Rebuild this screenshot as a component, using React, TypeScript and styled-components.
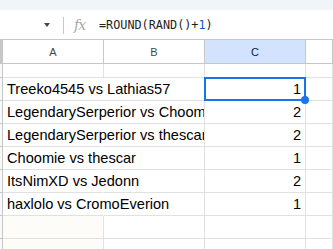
import { Fragment } from "react";
import styled, { createGlobalStyle } from "styled-components";

const GlobalStyle = createGlobalStyle`
  html, body {
    margin: 0;
    padding: 0;
    background: #ffffff;
    overflow: hidden;
  }
  body {
    font-family: "Liberation Sans", Arial, sans-serif;
  }
`;

const matches = [
  { name: "Treeko4545 vs Lathias57", result: 1 },
  { name: "LegendarySerperior vs Choomie", result: 2 },
  { name: "LegendarySerperior vs thescar", result: 2 },
  { name: "Choomie vs thescar", result: 1 },
  { name: "ItsNimXD vs Jedonn", result: 2 },
  { name: "haxlolo vs CromoEverion", result: 1 },
];

const Page = styled.div`
  width: 333px;
  height: 249px;
  overflow: hidden;
  display: flex;
  flex-direction: column;

  & > * {
    flex-shrink: 0;
  }
`;

const ChromeBand = styled.div`
  height: 10px;
  background: #f1f4f9;
`;

const FormulaBar = styled.div`
  height: 29px;
  display: flex;
  align-items: center;
  background: #ffffff;
`;

const NameBox = styled.div`
  width: 63px;
  height: 100%;
  display: flex;
  align-items: center;
  padding-left: 44px;
  box-sizing: border-box;
`;

const Caret = styled.span`
  width: 0;
  height: 0;
  border-left: 3.5px solid transparent;
  border-right: 3.5px solid transparent;
  border-top: 4px solid #444746;
  margin-top: 1px;
`;

const Divider = styled.span`
  width: 1px;
  height: 17px;
  background: #c7c7c7;
  margin-top: 2px;
`;

const FxLabel = styled.span`
  font-family: "DejaVu Serif", "Liberation Serif", serif;
  font-style: italic;
  font-size: 14px;
  color: #a8a8a8;
  margin-left: 10px;
  width: 25px;
  letter-spacing: -1px;
  margin-top: 1px;
`;

const Formula = styled.span`
  font-family: "DejaVu Sans Mono", monospace;
  font-size: 11.8px;
  color: #1f1f1f;
  margin-top: 1px;
`;

const FormulaNumber = styled.span`
  color: #1155cc;
`;

const Sheet = styled.div`
  display: grid;
  grid-template-columns: 3px 101px 101px 101px 1fr;
  grid-template-rows: 25px 14px;
  grid-auto-rows: 23px;
`;

const Corner = styled.div`
  background: #c7c7c7;
  border-top: 1px solid #c7c7c7;
  border-bottom: 1px solid #c4c7c5;
`;

const ColumnHeader = styled.div<{ $selected?: boolean }>`
  box-sizing: border-box;
  display: flex;
  align-items: center;
  justify-content: center;
  font-size: 11px;
  color: ${(p) => (p.$selected ? "#041e49" : "#444746")};
  background: ${(p) => (p.$selected ? "#d3e3fd" : "#ffffff")};
  border-top: 1px solid #c7c7c7;
  border-bottom: 1px solid #c4c7c5;
  border-right: 1px solid #c7c7c7;
`;

const RowHeader = styled.div`
  box-sizing: border-box;
  background: #f8f9fa;
  border-right: 1px solid #c7c7c7;
  border-bottom: 1px solid #c7c7c7;
`;

const Cell = styled.div<{
  $align?: "left" | "right";
  $spill?: boolean;
  $cream?: boolean;
  $cover?: boolean;
}>`
  box-sizing: border-box;
  position: ${(p) => (p.$cover ? "relative" : "static")};
  z-index: ${(p) => (p.$cover ? 1 : "auto")};
  background: ${(p) =>
    p.$cream ? "#fdfcf9" : p.$cover ? "#ffffff" : "transparent"};
  border-bottom: 1px solid #e1e1e1;
  border-right: 1px solid ${(p) => (p.$spill ? "transparent" : "#e1e1e1")};
  font-size: 14.6px;
  line-height: 22px;
  color: #000000;
  white-space: nowrap;
  overflow: visible;
  text-align: ${(p) => p.$align ?? "left"};
  padding: 0 4px 0 4px;
`;

const SelectedCell = styled(Cell)`
  z-index: 2;
`;

const SelectionBox = styled.div`
  position: absolute;
  top: -1px;
  left: -1px;
  right: -1px;
  bottom: -1px;
  border: 2px solid #1a73e8;
  pointer-events: none;
`;

const FillHandle = styled.span`
  position: absolute;
  right: -4px;
  bottom: -4px;
  width: 8px;
  height: 8px;
  border-radius: 50%;
  background: #1a73e8;
`;

export default function App() {
  return (
    <>
      <GlobalStyle />
      <Page>
        <ChromeBand />
        <FormulaBar>
          <NameBox>
            <Caret />
          </NameBox>
          <Divider />
          <FxLabel>fx</FxLabel>
          <Formula>
            =ROUND(RAND()+<FormulaNumber>1</FormulaNumber>)
          </Formula>
        </FormulaBar>
        <Sheet>
          <Corner />
          <ColumnHeader>A</ColumnHeader>
          <ColumnHeader>B</ColumnHeader>
          <ColumnHeader $selected>C</ColumnHeader>
          <ColumnHeader />

          <RowHeader />
          <Cell />
          <Cell />
          <Cell />
          <Cell />

          {matches.map((m, i) => {
            const Result = i === 0 ? SelectedCell : Cell;
            return (
              <Fragment key={m.name}>
                <RowHeader />
                <Cell $spill>{m.name}</Cell>
                <Cell />
                <Result $align="right" $cover>
                  {m.result}
                  {i === 0 && (
                    <>
                      <SelectionBox />
                      <FillHandle />
                    </>
                  )}
                </Result>
                <Cell />
              </Fragment>
            );
          })}

          {[0, 1].map((i) => (
            <Fragment key={i}>
              <RowHeader />
              <Cell $cream />
              <Cell />
              <Cell />
              <Cell />
            </Fragment>
          ))}
        </Sheet>
      </Page>
    </>
  );
}
